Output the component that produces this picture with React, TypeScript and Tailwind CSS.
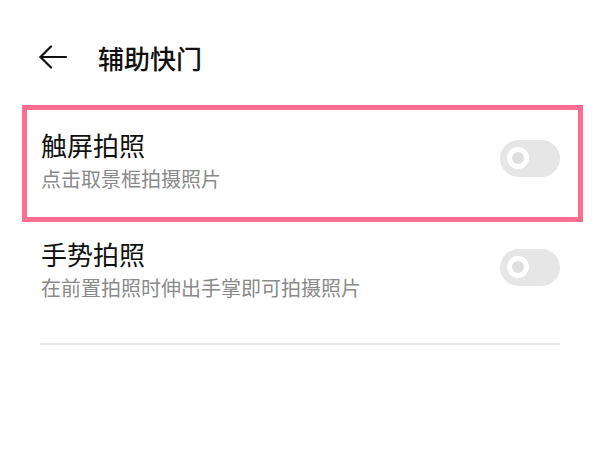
import React from 'react'

const font = { fontFamily: '"Noto Sans CJK SC", "Noto Sans", sans-serif' }

function Toggle({ className = '' }: { className?: string }) {
  return (
    <div className={`w-[60px] h-[37px] rounded-full bg-[#e6e6e6] flex items-center shrink-0 ${className}`}>
      <div className="ml-[7px] w-[22px] h-[22px] rounded-full border-[5px] border-white bg-[#dedede]" />
    </div>
  )
}

function Row({
  title,
  desc,
  highlighted,
  className = '',
}: {
  title: string
  desc: string
  highlighted?: boolean
  className?: string
}) {
  return (
    <div
      className={`ml-[22px] mr-[17px] border-[5px] flex items-center justify-between pl-[14px] pr-[18px] ${
        highlighted ? 'border-[#ff6d93]' : 'border-transparent'
      } ${className}`}
    >
      <div className="flex flex-col">
        <div className="text-[26px] leading-[34px] text-[#111]">{title}</div>
        <div className="mt-[4px] text-[20px] leading-[26px] text-[#8a8a8a]">{desc}</div>
      </div>
      <Toggle className="mb-[4px]" />
    </div>
  )
}

export default function App() {
  return (
    <div className="w-[600px] h-[450px] bg-white overflow-hidden" style={font}>
      <div className="h-[105px] pt-[9px] flex items-center px-[39px]">
        <svg width="28" height="24" viewBox="0 0 28 24" fill="none" stroke="#111" strokeWidth="2.2" strokeLinecap="round" strokeLinejoin="round">
          <path d="M27 12H1.5" />
          <path d="M12 1.5L1.5 12L12 22.5" />
        </svg>
        <div className="ml-[31px] text-[26px] font-medium text-[#111]">辅助快门</div>
      </div>
      <Row title="触屏拍照" desc="点击取景框拍摄照片" highlighted className="pt-[18px] pb-[25px]" />
      <Row title="手势拍照" desc="在前置拍照时伸出手掌即可拍摄照片" className="pt-[10px] pb-[37px]" />
      <div className="mx-[40px] h-[1.5px] bg-[#e8e8e8]" />
    </div>
  )
}
